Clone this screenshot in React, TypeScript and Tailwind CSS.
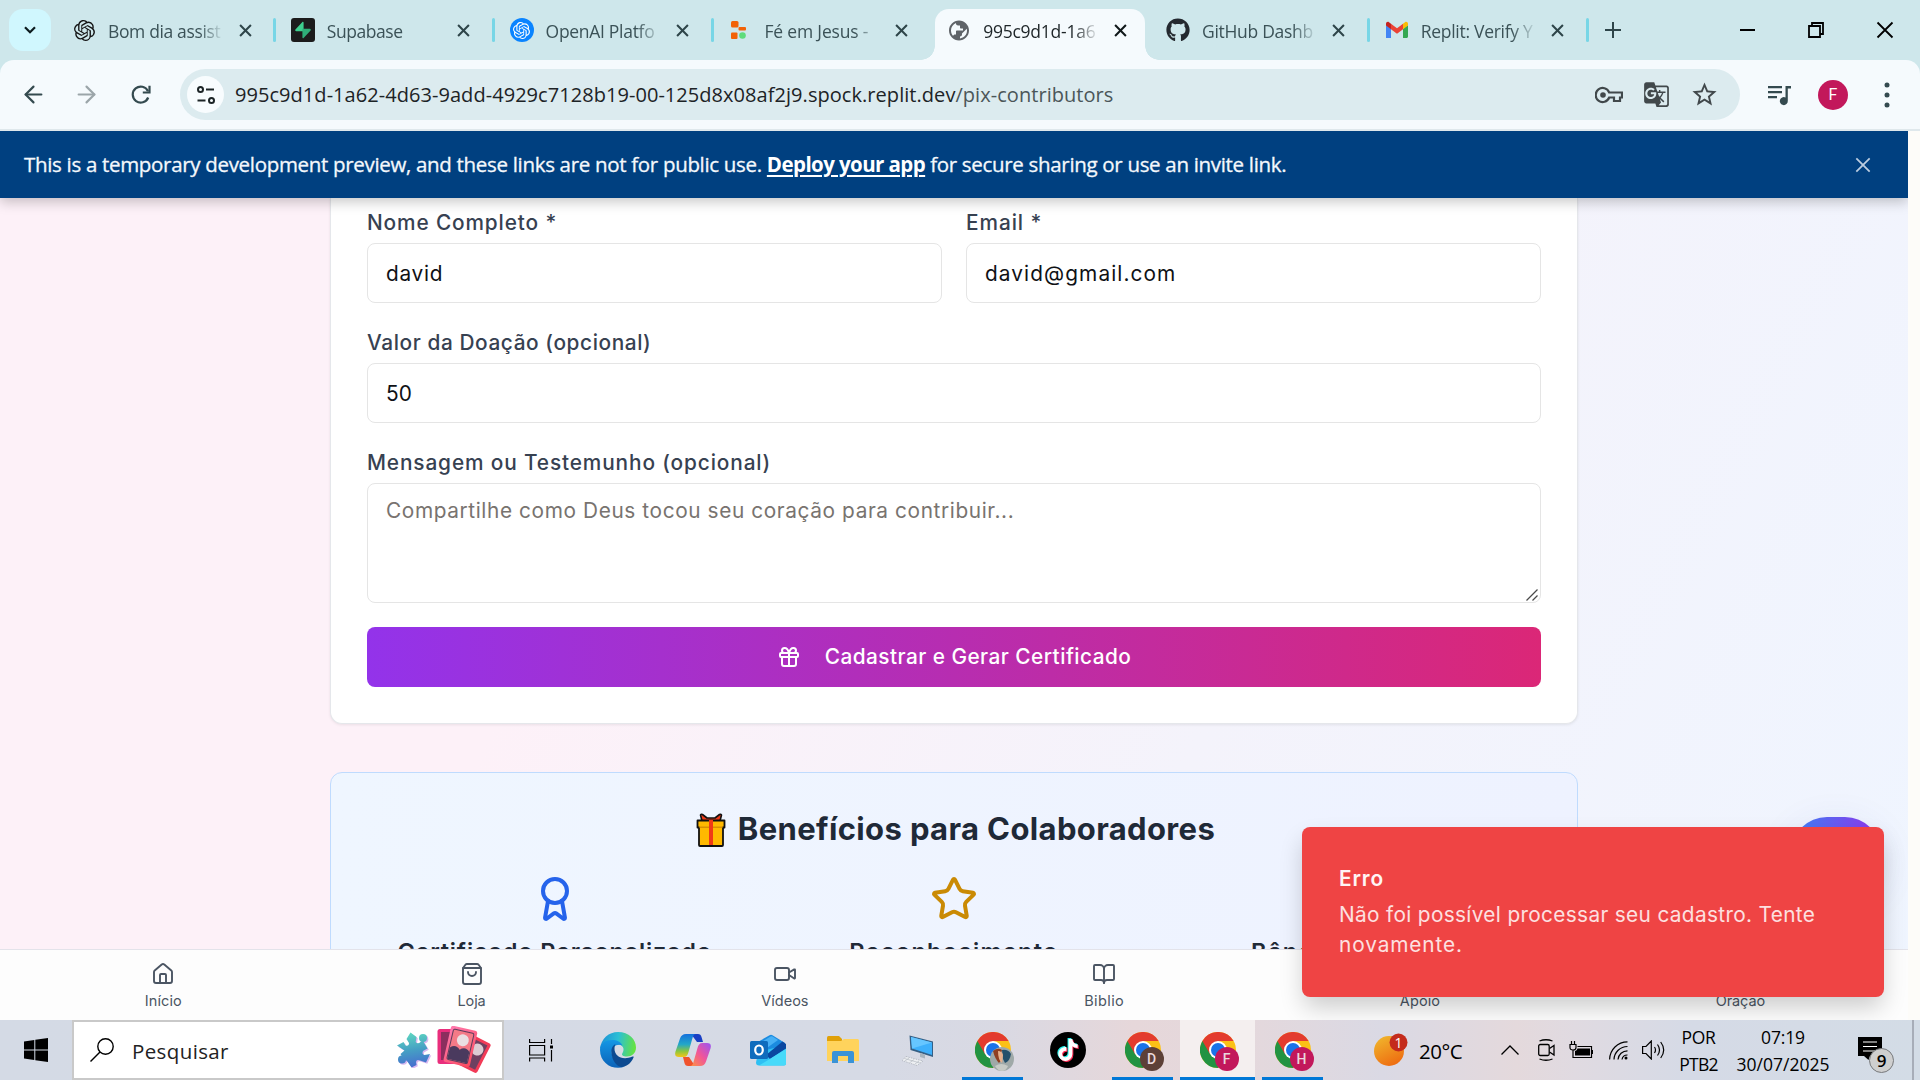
import React from 'react';
import { Home, ShoppingBag, Video, BookOpen, Heart, HandHeart, Gift, Award, Star, Shield, ArrowLeft, ArrowRight } from 'lucide-react';
import { SiOpenai } from 'react-icons/si';
import { FaGithub } from 'react-icons/fa';
import { FaTiktok } from 'react-icons/fa6';
import { MdPublic, MdGTranslate, MdStarBorder } from 'react-icons/md';

/* ---------- favicons ---------- */

function SupabaseIcon() {
  return (
    <svg viewBox="0 0 24 24" className="size-6">
      <rect width="24" height="24" rx="3" fill="#1c1c1c" />
      <path d="M12.6 4.6v8.6H5.2c-.9 0-1.300-1-.8-1.600l7-7.500c.4-.5 1.200-.2 1.200.5z" fill="#3ecf8e" />
      <path d="M11.400 19.400v-8.600h7.400c.9 0 1.300 1 .8 1.600l-7 7.500c-.4.500-1.200.2-1.200-.5z" fill="#2fae78" />
    </svg>
  );
}

function OpenAIPlatformIcon() {
  return (
    <span className="flex size-6 items-center justify-center rounded-full bg-[#0a84ff]">
      <SiOpenai className="size-[17px] text-white" />
    </span>
  );
}

function BlocksIcon() {
  return (
    <svg viewBox="0 0 24 24" className="size-6">
      <rect x="3" y="3" width="7.500" height="6.500" rx="1.500" fill="#f26207" />
      <rect x="10.500" y="9" width="7.500" height="3.500" rx="1" fill="#f26207" />
      <rect x="3" y="14.500" width="6.500" height="6.500" rx="1" fill="#f26207" />
      <circle cx="14.500" cy="17.500" r="3.300" fill="#5fdc7c" />
    </svg>
  );
}

function GmailIcon() {
  return (
    <svg viewBox="0 0 24 24" className="size-6">
      <path d="M1 20V7l5 3.700V20z" fill="#4285f4" />
      <path d="M18 20v-9.300L23 7v11.500c0 .8-.7 1.500-1.500 1.500z" fill="#34a853" />
      <path d="M18 5.700 20 4.200c1.300-1 3 0 3 1.600V7.500l-5 3.800z" fill="#fbbc04" />
      <path d="M6 11.300V5.700l6 4.500 6-4.500v5.600l-6 4.500z" fill="#ea4335" />
      <path d="M1 7.500V5.800c0-1.600 1.700-2.600 3-1.600l2 1.500v5.600z" fill="#c5221f" />
    </svg>
  );
}

/* ---------- browser chrome ---------- */

function CloseX({ className }: { className: string }) {
  return (
    <svg viewBox="0 0 12 12" className={className} fill="none" stroke="currentColor">
      <path d="M1 1l10 10M11 1L1 11" />
    </svg>
  );
}

type TabInfo = { title: string; icon: React.ReactNode; active?: boolean; line?: boolean; track: string };

const tabs: TabInfo[] = [
  { title: 'Bom dia assist', icon: <SiOpenai className="size-[21px] text-[#151515]" />, line: true, track: 'tracking-[-0.36px]' },
  { title: 'Supabase', icon: <SupabaseIcon />, line: true, track: 'tracking-[-0.45px]' },
  { title: 'OpenAI Platfo', icon: <OpenAIPlatformIcon />, line: true, track: 'tracking-[-0.3px]' },
  { title: 'Fé em Jesus - ', icon: <BlocksIcon />, track: 'tracking-[-0.17px]' },
  { title: '995c9d1d-1a6', icon: <MdPublic className="size-[25px] -scale-x-100 text-[#5f6368]" />, active: true, track: 'tracking-[-0.25px]' },
  { title: 'GitHub Dashb', icon: <FaGithub className="size-6 text-[#24292f]" />, line: true, track: 'tracking-[-0.3px]' },
  { title: 'Replit: Verify Y', icon: <GmailIcon />, line: true, track: 'tracking-[-0.29px]' },
];

function Tab({ tab }: { tab: TabInfo }) {
  return (
    <div className="flex h-[60px] w-[218.8px] shrink-0 items-end">
      <div
        className={
          tab.active
            ? 'relative flex h-[51px] w-[210px] items-center rounded-t-[14px] bg-[#f5fafd] pl-3'
            : 'flex h-[51px] w-[213px] items-center pl-3'
        }
      >
        {tab.active && (
          <>
            <span className="absolute bottom-0 -left-[14px] size-[14px] bg-[radial-gradient(circle_at_0_0,transparent_13.5px,#f5fafd_14px)]" />
            <span className="absolute -right-[14px] bottom-0 size-[14px] bg-[radial-gradient(circle_at_100%_0,transparent_13.5px,#f5fafd_14px)]" />
          </>
        )}
        <span className="mb-[9px] flex size-6 shrink-0 items-center justify-center">{tab.icon}</span>
        <span
          className={`mb-[7px] ml-3 w-[116px] shrink-0 overflow-hidden whitespace-nowrap text-[17.5px] [mask-image:linear-gradient(to_right,black_78%,transparent)] ${tab.track} ${
            tab.active ? 'text-[#1d2427]' : 'text-[#3b5257]'
          }`}
        >
          {tab.title}
        </span>
        <span className={`mb-[9px] ml-[9px] flex size-6 items-center justify-center ${tab.active ? 'text-[#10181a]' : 'text-[#2e4549]'}`}>
          <CloseX className="size-[13px] stroke-[1.9]" />
        </span>
      </div>
      {tab.line && <span className="mb-[18px] h-6 w-[3px] rounded-full bg-[#78d6e6]" />}
    </div>
  );
}

function TabStrip() {
  return (
    <div className="flex h-[60px] bg-[#cee7eb] pl-[9px]">
      <button className="mt-[9px] mr-[9px] flex h-[42px] w-[42px] items-center justify-center rounded-[14px] bg-[#d0f7fe]">
        <svg viewBox="0 0 12 8" className="h-[8px] w-3" fill="none" stroke="#0d1b1e" strokeWidth="2.200">
          <path d="M1 1.200l5 5 5-5" />
        </svg>
      </button>
      {tabs.map((t) => (
        <Tab key={t.title} tab={t} />
      ))}
      <div className="flex w-[42px] items-center justify-center">
        <svg viewBox="0 0 16 16" className="size-4" stroke="#2e4549" strokeWidth="2">
          <path d="M8 0v16M0 8h16" />
        </svg>
      </div>
      <div className="ml-auto flex w-[207px] items-center text-black">
        <span className="flex w-[68px] justify-center">
          <span className="h-[2px] w-[15px] bg-black" />
        </span>
        <span className="flex w-[69px] justify-center">
          <svg viewBox="0 0 16 16" className="size-4" fill="none" stroke="black" strokeWidth="1.800">
            <path d="M1 4h11v11H1zM4 4V1h11v11h-3" />
          </svg>
        </span>
        <span className="flex w-[69px] justify-center">
          <CloseX className="size-[18px] stroke-[1.2]" />
        </span>
      </div>
    </div>
  );
}

function Toolbar() {
  return (
    <div className="bg-[#cee7eb]">
      <div className="flex h-[71px] items-start rounded-t-[14px] border-b-2 border-[#dfe8ec] bg-[#f5fafd] pt-[9px] text-[#344a4f]">
        <div className="flex h-[51px] w-[180px] items-center pl-[20px]">
          <ArrowLeft className="size-[27px] stroke-[1.9]" />
          <ArrowRight className="ml-[26px] size-[27px] stroke-[1.9] text-[#9ba5a9]" />
          <svg viewBox="0 0 20 20" className="ml-[31px] size-[20px]" fill="none" stroke="currentColor" strokeWidth="2.200">
            <path d="M17.200 12.500A8 8 0 1 1 17 6.200" />
            <path d="M18.500 0.800v6.700H11.800" />
          </svg>
        </div>
        <div className="flex h-[51px] w-[1560px] items-center rounded-full bg-[#dcebef] pl-[7px]">
          <span className="flex size-[37px] items-center justify-center rounded-full bg-[#f8fcfe]">
            <svg viewBox="0 0 20 20" className="size-5" fill="none" stroke="#1c2426" strokeWidth="2">
              <circle cx="4.500" cy="4.500" r="2.500" />
              <path d="M10 4.500h8M1.500 15.500h8" />
              <circle cx="15.500" cy="15.500" r="2.500" />
            </svg>
          </span>
          <span className="ml-[11px] whitespace-nowrap text-[20px] leading-[30px] tracking-[0.05px] text-[#1d2326]">
            995c9d1d-1a62-4d63-9add-4929c7128b19-00-125d8x08af2j9.spock.replit.dev
            <span className="text-[#4b5659]">/pix-contributors</span>
          </span>
          <div className="mr-[21px] ml-auto flex items-center text-[#41484b]">
            <svg viewBox="0 0 28 20" className="h-5 w-7" fill="none" stroke="currentColor" strokeWidth="2.200">
              <path d="M14.200 7.500A7 7 0 1 0 14.200 12.500H19V16h6v-3.500h2v-5z" />
              <circle cx="8" cy="10" r="2.800" fill="currentColor" stroke="none" />
            </svg>
            <MdGTranslate className="ml-[20px] size-[27px]" />
            <MdStarBorder className="ml-[20px] size-[29px]" />
          </div>
        </div>
        <div className="flex h-[51px] flex-1 items-center">
          <svg viewBox="0 0 24 22" className="ml-[28px] h-[22px] w-6" fill="currentColor">
            <path d="M0 2h14v2.200H0zM0 7h14v2.200H0zM0 12h9v2.200H0z" />
            <path d="M17.500 2H23v2.400h-3.200V17a4 4 0 1 1-2.300-3.500z" />
          </svg>
          <span className="ml-[26px] flex size-[30px] items-center justify-center rounded-full bg-[#c2185b] font-['Roboto'] text-[16px] text-white">F</span>
          <svg viewBox="0 0 6 26" className="ml-[36px] h-[26px] w-[6px]" fill="currentColor">
            <circle cx="3" cy="3" r="2.500" />
            <circle cx="3" cy="13" r="2.500" />
            <circle cx="3" cy="23" r="2.500" />
          </svg>
        </div>
      </div>
    </div>
  );
}

function PreviewBanner() {
  return (
    <div className="relative z-10 flex h-[67px] shrink-0 items-center bg-[#004080] pl-6 text-[20.5px] font-medium text-[#f4f8fc] shadow-[0_4px_12px_rgba(0,0,0,0.22)]">
      <p className="whitespace-nowrap tracking-[-0.315px] [-webkit-text-stroke:0.3px]">
        This is a temporary development preview, and these links are not for public use.{' '}
        <a className="font-bold tracking-[-0.58px] text-white underline decoration-2 underline-offset-[3px] [-webkit-text-stroke:0px]">Deploy your app</a>
        {' '}for secure sharing or use an invite link.
      </p>
      <span className="mr-[37px] ml-auto text-[#bccde0]">
        <CloseX className="size-4 stroke-[1.3]" />
      </span>
    </div>
  );
}

/* ---------- form ---------- */

function Field({ label, track, children }: { label: string; track: string; children: React.ReactNode }) {
  return (
    <label className="flex flex-col gap-[6px]">
      <span className={`h-[30px] text-[20.800px] leading-[31px] font-medium text-[#374151] ${track}`}>{label}</span>
      {children}
    </label>
  );
}

function DonationCard() {
  return (
    <section className="w-[1248px] rounded-b-xl border border-t-0 border-[#e5e7eb] bg-white px-9 pt-[9px] pb-9 shadow-[0_1px_3px_rgba(0,0,0,0.08)]">
      <form className="flex flex-col gap-6 text-[20.800px] text-[#0f1115]">
        <div className="grid grid-cols-2 gap-6">
          <Field label="Nome Completo *" track="tracking-[0.88px]">
            <input defaultValue="david" className="h-[60px] w-full rounded-lg border border-[#e5e5e5] px-[18px] tracking-[0.75px]" />
          </Field>
          <Field label="Email *" track="tracking-[0.95px]">
            <input defaultValue="david@gmail.com" className="h-[60px] w-full rounded-lg border border-[#e5e5e5] px-[18px] tracking-[1.1px]" />
          </Field>
        </div>
        <Field label="Valor da Doação (opcional)" track="tracking-[0.6px]">
          <input defaultValue="50" className="h-[60px] w-full rounded-lg border border-[#e5e5e5] px-[18px] tracking-[0.1px]" />
        </Field>
        <Field label="Mensagem ou Testemunho (opcional)" track="tracking-[0.88px]">
          <span className="relative h-[120px]">
            <textarea
              placeholder="Compartilhe como Deus tocou seu coração para contribuir..."
              className="block h-[120px] w-full resize-none rounded-lg border border-[#e5e5e5] px-[18px] py-[12px] leading-[30px] tracking-[0.61px] placeholder:text-[#78736f]"
            />
            <svg viewBox="0 0 12 12" className="absolute right-[3px] bottom-[2px] size-3" stroke="#4a4a4a" strokeWidth="1.300">
              <path d="M0.500 11.500l11-11M6.500 11.500l5-5" />
            </svg>
          </span>
        </Field>
        <button
          type="button"
          className="flex h-[60px] items-center justify-center rounded-lg bg-linear-to-r/srgb from-[#9333ea] to-[#db2777] text-[20.800px] font-medium tracking-[0.47px] text-white"
        >
          <Gift className="mr-[24px] size-6 stroke-2" />
          Cadastrar e Gerar Certificado
        </button>
      </form>
    </section>
  );
}

function GiftEmoji() {
  return (
    <svg viewBox="0 0 30 34" className="h-[34px] w-[30px]" strokeLinejoin="round">
      <path d="M6 8 L4.500 2 Q5 0.800 6.500 1.500 L11 5 H19 L23.500 1.500 Q25 0.800 25.500 2 L24 8z" fill="#f03a17" stroke="#111" strokeWidth="1.600" />
      <path d="M1.500 7.500h27v7h-1.500v17.500q0 1-1 1H4q-1 0-1-1V14.500H1.500z" fill="#ffb900" stroke="#111" strokeWidth="1.800" />
      <path d="M3.500 13.500h23v1.500h-23z" fill="#d99000" />
      <path d="M13 7h4v25h-4z" fill="#f03a17" />
    </svg>
  );
}

function BenefitsCard() {
  return (
    <section className="mt-12 w-[1248px] rounded-xl border border-[#bfdbfe] bg-linear-to-r/srgb from-[#eff6ff] to-[#eef2ff] px-9 pt-9 text-[#1f2937]">
      <h2 className="flex h-[41px] items-center justify-center gap-[12px] pl-[3px] text-[31px] font-bold tracking-[0.36px]">
        <GiftEmoji />
        Benefícios para Colaboradores
      </h2>
      <div className="mt-[25px] grid grid-cols-3 gap-6 text-center text-[23.500px] leading-[34px] font-semibold">
        <div className="flex flex-col items-center gap-[12px]">
          <Award className="size-12 stroke-2 text-[#2563eb]" />
          <h3 className="tracking-[0.8px]">Certificado Personalizado</h3>
        </div>
        <div className="flex flex-col items-center gap-[12px]">
          <Star className="size-12 stroke-2 text-[#ca8a04]" />
          <h3 className="tracking-[1.300px]">Reconhecimento</h3>
        </div>
        <div className="flex flex-col items-center gap-[12px]">
          <Shield className="size-12 stroke-2 text-[#16a34a]" />
          <h3 className="tracking-[1.200px]">Bênção Especial</h3>
        </div>
      </div>
    </section>
  );
}

const navItems = [
  { label: 'Início', Icon: Home, track: 'tracking-[0.1px]' },
  { label: 'Loja', Icon: ShoppingBag, track: 'tracking-[-0.1px]' },
  { label: 'Vídeos', Icon: Video, track: 'tracking-[0px]' },
  { label: 'Biblio', Icon: BookOpen, track: 'tracking-[0.4px]' },
  { label: 'Apoio', Icon: HandHeart, track: 'tracking-[0.1px]' },
  { label: 'Oração', Icon: Heart, track: 'tracking-[-0.1px]' },
];

function BottomNav() {
  return (
    <nav className="absolute inset-x-0 bottom-0 flex h-[71px] justify-around border-t border-[#e3e3ea] bg-[#fdfdfd] pr-[5px] pl-[7px] text-[#4b5563]">
      {navItems.map(({ label, Icon, track }) => (
        <div key={label} className="flex flex-col items-center pt-3">
          <Icon className="size-6 stroke-[1.9]" />
          <span className={`mt-[4px] text-[14.500px] leading-[21px] font-normal ${track}`}>{label}</span>
        </div>
      ))}
    </nav>
  );
}

function Toast() {
  return (
    <div className="absolute right-6 bottom-[23px] h-[170px] w-[582px] rounded-lg bg-[#ef4444] pt-[37px] pl-[37px] text-[20.800px] leading-[30px] shadow-[0_12px_24px_-2px_rgba(0,0,0,0.2)]">
      <p className="font-semibold tracking-[0.85px] text-[#fff5f5]">Erro</p>
      <p className="mt-[6px] tracking-[0.34px] whitespace-nowrap text-[#fde0e0]">
        Não foi possível processar seu cadastro. Tente
        <br />
        <span className="tracking-[0.9px]">novamente.</span>
      </p>
    </div>
  );
}

function PageView() {
  return (
    <div className="flex h-[889px] bg-[#fdfcf9] font-['Inter',sans-serif]">
      <div className="relative flex w-[1908px] flex-col overflow-hidden bg-[linear-gradient(118deg,#fdf1f8_0%,#fdf1f8_34%,#f4f3fb_64%,#eff5ff_100%)]">
        <div className="font-['Open_Sans',sans-serif]">
          <PreviewBanner />
        </div>
        <main className="flex flex-col items-center">
          <DonationCard />
          <BenefitsCard />
        </main>
        <div className="absolute right-[27px] bottom-[131px] h-[72px] w-[90px] rounded-full bg-linear-to-r/srgb from-[#3b82f6] to-[#9333ea] shadow-[0_10px_40px_rgba(60,70,180,0.1)]" />
        <BottomNav />
        <Toast />
      </div>
    </div>
  );
}

/* ---------- taskbar ---------- */

function Puzzle() {
  return (
    <svg viewBox="0 0 36 36" className="size-9">
      <defs>
        <linearGradient id="pz" gradientUnits="userSpaceOnUse" x1="14" y1="0" x2="20" y2="36">
          <stop offset="0" stopColor="#5fd9c0" />
          <stop offset="0.500" stopColor="#459fc4" />
          <stop offset="1" stopColor="#4669d0" />
        </linearGradient>
      </defs>
      {[
        ['translate(1.300 1.300)', '#d9b8f0'],
        ['translate(0 0)', 'url(#pz)'],
      ].map(([t, f]) => (
        <g key={f} transform={t} fill={f}>
          <path d="M1 13.500l6.500-3.500 2 3.500q3.500 1 3.500-2.500L10.500 7 14.500.5 20.500 5l-.8 5q2 2.500 4.800 0L27 9l4.500 7.500-4.500 2.500q-1.500 3.500 1.500 4l5.500-1-4 8.500-6-2q-3.500-1.500-4 1.500l.5 3L15.500 35.500 11 29 7.500 27 4.500 22l4-3.500z" />
          <circle cx="27" cy="6" r="4" />
          <circle cx="6" cy="27.500" r="4" />
        </g>
      ))}
    </svg>
  );
}

function Cards() {
  return (
    <svg viewBox="0 0 54 48" className="h-12 w-[54px]">
      <defs>
        <linearGradient id="cd" x1="0" y1="0" x2="1" y2="1">
          <stop offset="0" stopColor="#ff7ab0" />
          <stop offset="1" stopColor="#fa4a5d" />
        </linearGradient>
      </defs>
      <rect x="0.500" y="3" width="24" height="35" rx="2.500" fill="#e92e7c" />
      <path d="M4 6h16v28H4z" fill="#8b2e5e" />
      <g transform="rotate(27 36 28)">
        <rect x="25" y="11" width="23" height="33" rx="2.500" fill="#f23b57" />
        <rect x="28" y="14" width="17" height="27" fill="#6e4060" />
        <circle cx="38" cy="22" r="6" fill="#dccbd2" />
      </g>
      <g transform="rotate(13 24 20)">
        <rect x="10" y="2" width="27" height="37" rx="2.500" fill="url(#cd)" />
        <rect x="13" y="5" width="21" height="31" rx="1.500" fill="#f47a87" stroke="#5d3d5c" strokeWidth="1" />
        <path d="M13.500 24q5-5 10 0 5-5 10 0v11.500h-20z" fill="#4a3a5e" />
        <circle cx="24.500" cy="14" r="6" fill="#eadfe2" />
      </g>
    </svg>
  );
}

function TaskViewIcon() {
  return (
    <svg viewBox="0 0 24 24" className="-ml-[3px] size-6" fill="none" stroke="black" strokeWidth="1.200">
      <path d="M.6 7.500h15v9.500H.6zM.6 1v3.500h15V1M.6 23.500V20h15v3.500M22.500 1v5M22.500 12v11.500" />
      <rect x="21" y="7.500" width="3" height="3" fill="black" stroke="none" />
    </svg>
  );
}

function EdgeIcon() {
  return (
    <svg viewBox="0 0 36 36" className="size-9">
      <defs>
        <linearGradient id="eg1" x1="0" y1="0.300" x2="1" y2="0.400">
          <stop offset="0" stopColor="#1b8fd8" />
          <stop offset="0.500" stopColor="#2bc0d4" />
          <stop offset="1" stopColor="#66e33f" />
        </linearGradient>
        <linearGradient id="eg2" x1="0" y1="0" x2="0" y2="1">
          <stop offset="0" stopColor="#1597e5" />
          <stop offset="1" stopColor="#0b62b8" />
        </linearGradient>
      </defs>
      <path d="M0 17C1 6.500 9 0 18 0c11 0 18 7.500 18 15.500 0 6-4.500 9-9 9-4 0-6-1.500-4.500-3.500 2.500-4 .5-8.500-5-8.500C10 12.500 2 14 0 17z" fill="url(#eg1)" />
      <path d="M0 18C0 11 6 8 12 8c5 0 9 2 10.500 5.500-6-2.500-12 2-10.500 9S20 34 25 34.500C14 39 0 32 0 18z" fill="url(#eg2)" />
      <path d="M11.500 21c-.5-4 1-7.500 4-9-.5 1-1 2.500-1 5 0 7 8 12 18 7.500 1-.4 1.500.3 1 1C31 31.500 26 35 21.500 35c-5.500-1-9.500-7-10-14z" fill="#0c4a91" />
    </svg>
  );
}

function CopilotIcon() {
  return (
    <svg viewBox="0 0 36 36" className="size-9">
      <defs>
        <linearGradient id="cp1" x1="0" y1="0" x2="0" y2="1">
          <stop offset="0" stopColor="#1470dd" />
          <stop offset="0.450" stopColor="#22a7c9" />
          <stop offset="0.750" stopColor="#8cc63f" />
          <stop offset="1" stopColor="#f5c518" />
        </linearGradient>
        <linearGradient id="cp2" x1="1" y1="0" x2="0" y2="1">
          <stop offset="0" stopColor="#9a55f4" />
          <stop offset="0.500" stopColor="#f0559a" />
          <stop offset="1" stopColor="#ff9440" />
        </linearGradient>
      </defs>
      <path d="M16 2h7c2 0 3 1 3.500 3l1.500 5h-6z" fill="#1a3fc4" />
      <path d="M20 34h-7c-2 0-3-1-3.500-3L8 25h6z" fill="#f0522c" />
      <path d="M11 2h10c-2 0-3 2-3.500 4L13.500 20c-.7 3-2 5-5 5H4c-3.500 0-4.500-2-3.500-5.500L5 6.500C6 3.500 8 2 11 2z" fill="url(#cp1)" />
      <path d="M25 34H15c2 0 3-2 3.500-4l4-14c.7-3 2-5 5-5H32c3.500 0 4.500 2 3.500 5.500L31 29.500c-1 3-3 4.500-6 4.500z" fill="url(#cp2)" />
    </svg>
  );
}

function OutlookIcon() {
  return (
    <svg viewBox="0 0 36 32" className="h-8 w-9">
      <path d="M6 9 19.500 1.200q1.500-.8 3 0L35 9v8H6z" fill="#1b8be0" />
      <path d="M10 9l10.500-6.500q1-.5 2 0L28 6 14 16z" fill="#47b0f5" />
      <path d="M8 18 36 11v18.500q0 2-2 2H9q-3 0-3-3z" fill="#2fc0f3" />
      <path d="M16 21 32.500 7.500 36 10v4.500L20 25z" fill="#0a47a0" />
      <path d="M9 31.500 36 15v14.500q0 2-2 2z" fill="#48dafa" />
      <rect x="0" y="7" width="18" height="18" rx="1.500" fill="#0f6cbd" />
      <ellipse cx="9" cy="16" rx="3.800" ry="4.500" fill="none" stroke="white" strokeWidth="2.200" />
    </svg>
  );
}

function FolderIcon() {
  return (
    <svg viewBox="0 0 32 28" className="h-7 w-8">
      <path d="M0 1.500Q0 0 1.500 0H12l3 3v6H0z" fill="#e0a008" />
      <path d="M0 5h14l3-2h13.500Q32 3 32 4.500V25H0z" fill="#ffd35c" />
      <path d="M5 27V17q0-2 2-2h18q2 0 2 2v10h-6v-7H11v7z" fill="#3a93d6" />
    </svg>
  );
}

function ComputerIcon() {
  return (
    <svg viewBox="0 0 32 32" className="size-8">
      <path d="M7.500 1.500 31 7.500v15.500L8.500 16z" fill="#355f85" />
      <path d="M9 3 30 8.500v12.500L10 14.500z" fill="#3eb0fb" />
      <path d="M9 3 30 8.500 10 14.500z" fill="#66c6ff" />
      <path d="M18 19l5 1.500v4l-5-1.500z" fill="#a9b4be" />
      <path d="M4 22.500l17 4.500-6 4.500L0 26.500z" fill="#eef0f3" stroke="#a5abb4" strokeWidth="0.700" strokeDasharray="1.500 1" />
      <path d="M2.500 24.500l15.500 4.500M7 24l-4 3M12 25.500l-4 3M17 27l-4 3" stroke="#b4bac2" strokeWidth="0.700" />
    </svg>
  );
}

function ChromeIcon({ children }: { children: React.ReactNode }) {
  return (
    <span className="relative size-9">
      <svg viewBox="0 0 36 36" className="size-9">
        <circle cx="18" cy="18" r="18" fill="#fbc116" />
        <path d="M18 18 2.400 9A18 18 0 0 0 18 36l7.800-13.500z" fill="#229342" />
        <path d="M2.400 9 10.200 22.500 18 9h15.600A18 18 0 0 0 2.400 9z" fill="#e33b2e" />
        <circle cx="18" cy="18" r="9" fill="white" />
        <circle cx="18" cy="18" r="7" fill="#1a73e8" />
      </svg>
      <span className="absolute top-[15px] left-[15px]">{children}</span>
    </span>
  );
}

function Letter({ c, brown }: { c: string; brown?: boolean }) {
  return (
    <span
      className={`flex size-6 items-center justify-center rounded-full font-['Roboto'] text-[14px] font-medium text-[#ead9dd] ${
        brown ? 'bg-[#5d4037]' : 'bg-[#c2185b]'
      }`}
    >
      {c}
    </span>
  );
}

function PhotoAvatar() {
  return (
    <svg viewBox="0 0 24 24" className="size-6">
      <circle cx="12" cy="12" r="12" fill="#9fa9a8" />
      <path d="M3 4Q8 0 12 3L10 9Q12 13 9 16 5 12 3 4z" fill="#8f3f22" />
      <path d="M12 3q6-1 9 4-1 7-6 9l-2-4z" fill="#24506b" />
      <path d="M8 4q4 0 5 4l-1 8q-4-3-4-12z" fill="#e7b08c" />
      <path d="M5 19q6-4 13 0-2 5-6 5t-7-5z" fill="#c7cbc6" />
    </svg>
  );
}

function Slot({ children, state }: { children: React.ReactNode; state?: 'open' | 'active' }) {
  return (
    <div className={`flex h-[60px] w-[75px] flex-col items-center ${state === 'active' ? 'bg-[#f4efef]' : ''}`}>
      <div className="flex h-[57px] items-center pt-[3px]">{children}</div>
      {state && <span className={`h-[3px] bg-[#0078d7] ${state === 'active' ? 'w-full' : 'w-[61px]'}`} />}
    </div>
  );
}

function Taskbar() {
  return (
    <footer className="flex h-[60px] bg-[linear-gradient(90deg,#d4dae5_0%,#d6dae5_46%,#d9d9e3_52%,#e6d7da_59%,#e4d8dc_65%,#dad9e4_72%,#e4d9dc_79%,#e0dae1_82%,#d5dae6_88%,#d3dce6_100%)] text-black">
      <div className="flex w-[72px] items-center justify-center">
        <svg viewBox="0 0 24 24" className="size-6" fill="black">
          <path d="M0 3.400 10.300 2v9.500H0zM11.300 1.800 24 0v11.500H11.300zM0 12.500h10.300V22L0 20.600zM11.300 12.500H24V24l-12.700-1.800z" />
        </svg>
      </div>
      <div className="flex h-[60px] w-[432px] items-center border-2 border-[#c9c9c9] bg-white pl-4">
        <svg viewBox="0 0 24 24" className="size-6" fill="none" stroke="black" strokeWidth="1.400">
          <circle cx="15.500" cy="8.500" r="7.700" />
          <path d="M10 14 0.500 23.500" />
        </svg>
        <span className="mt-[3px] ml-[18px] text-[20.500px] tracking-[0.38px] text-[#222]">Pesquisar</span>
        <div className="mr-[11px] ml-auto flex items-center gap-[5px]">
          <Puzzle />
          <Cards />
        </div>
      </div>
      <div className="ml-px flex">
        <Slot><TaskViewIcon /></Slot>
        <Slot><EdgeIcon /></Slot>
        <Slot><CopilotIcon /></Slot>
        <Slot><OutlookIcon /></Slot>
        <Slot><FolderIcon /></Slot>
        <Slot><ComputerIcon /></Slot>
        <Slot state="open"><ChromeIcon><PhotoAvatar /></ChromeIcon></Slot>
        <Slot>
          <span className="flex size-9 items-center justify-center rounded-full bg-black">
            <FaTiktok className="size-[22px] text-white [filter:drop-shadow(1px_1px_0_#fe2c55)_drop-shadow(-1px_-1px_0_#25f4ee)]" />
          </span>
        </Slot>
        <Slot state="open"><ChromeIcon><Letter c="D" brown /></ChromeIcon></Slot>
        <Slot state="active"><ChromeIcon><Letter c="F" /></ChromeIcon></Slot>
        <Slot state="open"><ChromeIcon><Letter c="H" /></ChromeIcon></Slot>
      </div>
      <div className="ml-[44px] flex h-[60px] items-center">
        <svg viewBox="0 0 34 34" className="size-[34px]">
          <defs>
            <linearGradient id="sun" x1="0.200" y1="0" x2="0.700" y2="1">
              <stop offset="0" stopColor="#f0b52c" />
              <stop offset="1" stopColor="#ee6a10" />
            </linearGradient>
          </defs>
          <circle cx="15" cy="18" r="15" fill="url(#sun)" />
          <circle cx="24.500" cy="9.500" r="9" fill="#c42b1c" />
          <text x="24.500" y="14.500" textAnchor="middle" fontSize="14" fill="white">1</text>
        </svg>
        <span className="mt-[2px] ml-[11px] text-[20.500px] tracking-[-0.5px]">20°C</span>
      </div>
      <div className="ml-auto flex h-[60px] items-center">
        <svg viewBox="0 0 18 10" className="h-[10px] w-[18px]" fill="none" stroke="black" strokeWidth="1.300">
          <path d="M.5 9.500 9 1l8.500 8.500" />
        </svg>
        <svg viewBox="0 0 17 22" className="ml-[19px] h-[22px] w-[17px]" fill="none" stroke="black" strokeWidth="1.300">
          <rect x="0.700" y="5.500" width="10.500" height="11" rx="1.500" />
          <path d="M11.500 9.500 16 6.500v9.500l-4.500-3M1.500 2Q8 -.5 14.500 2M1.500 20q6.500 2.500 13 0" />
        </svg>
        <svg viewBox="0 0 24 18" className="ml-[14px] h-[18px] w-6" fill="none" stroke="black" strokeWidth="1.200">
          <path d="M1 3.500h6v3q0 2.500-3 2.500T1 6.500zM2.500 3.500V0M5.500 3.500V0M4 9v7.500h18.500v-11H8.500" />
          <path d="M6 14.500V10q2-.5 2.500-2.500H21v7z" fill="black" stroke="none" />
          <path d="M23.300 9v4" strokeWidth="1.600" />
        </svg>
        <svg viewBox="0 0 19 19" className="ml-4 size-[19px]" fill="none" stroke="black" strokeWidth="1.200">
          <path d="M.6 18.500A18 18 0 0 1 18.500.8M5 18.500A13.500 13.500 0 0 1 18.500 5.500M9 18.500a9.500 9.500 0 0 1 9.500-8.700M13 18.500a5.500 5.500 0 0 1 5.500-4.500" />
          <circle cx="17" cy="17" r="1.500" fill="black" stroke="none" />
        </svg>
        <svg viewBox="0 0 23 20" className="ml-[14px] h-5 w-[23px]" fill="none" stroke="black" strokeWidth="1.200">
          <path d="M.6 6.500H4L9.300 1v18L4 13.500H.6zM12.500 7q2 3 0 6M15.500 4.500q4 5.500 0 11M18.700 2q6 8 0 16" />
        </svg>
        <div className="mt-px ml-[13px] flex w-[41px] flex-col items-center text-[17.500px] leading-[27px] tracking-[-0.800px]">
          <span className="tracking-[-0.3px]">POR</span>
          <span>PTB2</span>
        </div>
        <div className="mt-px ml-[15px] flex w-[98px] flex-col items-center text-[17.500px] leading-[27px]">
          <span className="tracking-[-0.13px]">07:19</span>
          <span>30/07/2025</span>
        </div>
        <svg viewBox="0 0 38 38" className="mt-[9px] ml-[26px] size-[38px]">
          <path d="M0 1h24v19H12l-1.500 4L6 20H0z" fill="black" />
          <path d="M5 6h14M5 10.500h14M5 15h14" stroke="white" strokeWidth="1.100" />
          <circle cx="23.500" cy="24.500" r="12" fill="#cfcfcf" stroke="#77797c" strokeWidth="1" />
          <text x="23.500" y="30.500" textAnchor="middle" fontSize="17" fontWeight="600" fill="black">9</text>
        </svg>
        <span className="ml-[16px] h-[60px] w-[8px] border-l-2 border-[#a7adb8]" />
      </div>
    </footer>
  );
}

export default function App() {
  return (
    <div className="flex h-[1080px] w-[1920px] flex-col overflow-hidden font-['Open_Sans',sans-serif]">
      <TabStrip />
      <Toolbar />
      <PageView />
      <Taskbar />
    </div>
  );
}
